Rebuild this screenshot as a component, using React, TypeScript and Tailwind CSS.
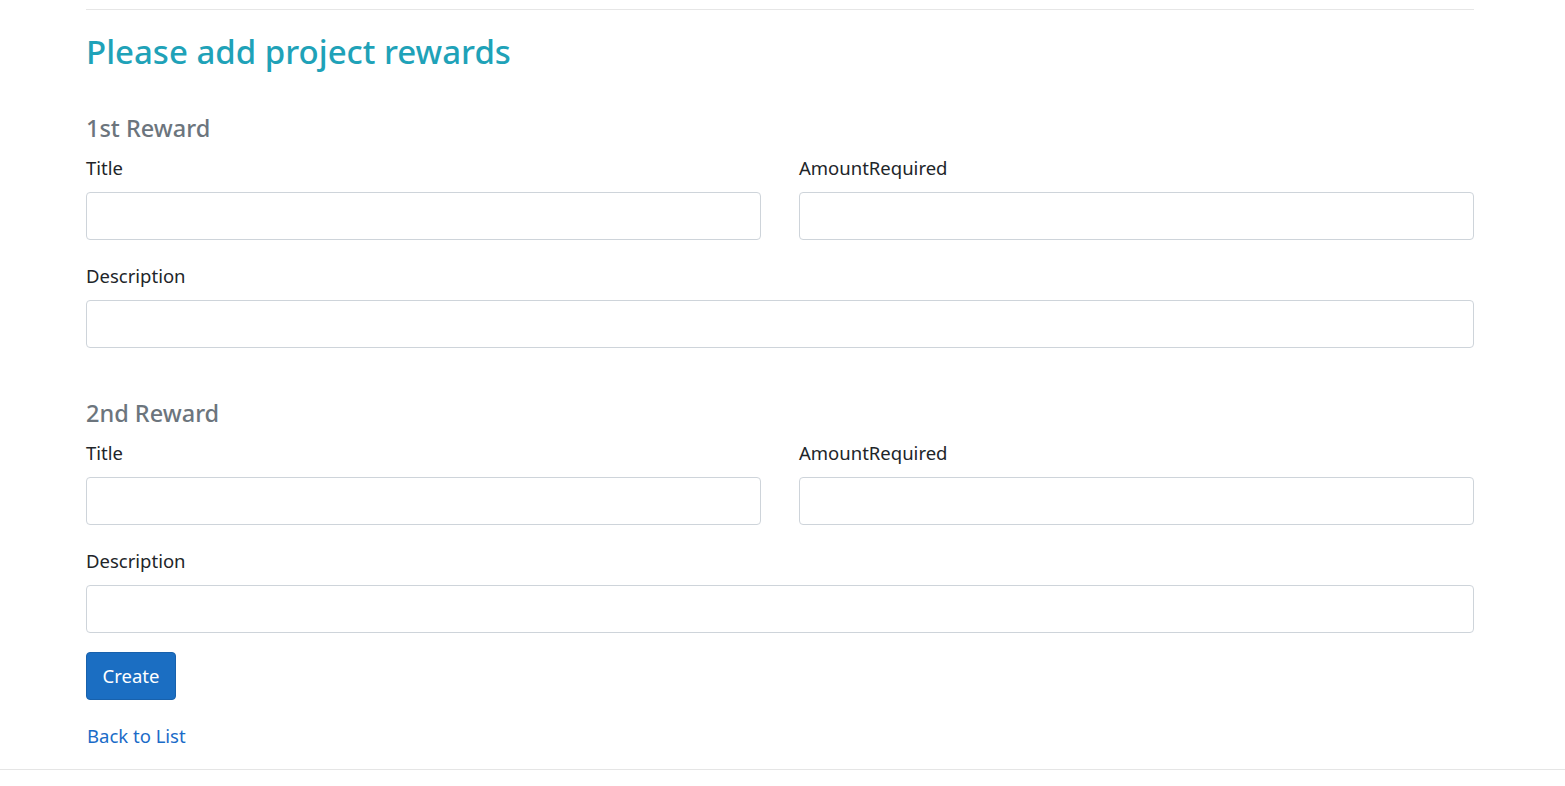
export default function App() {
  const font = { fontFamily: '"Noto Sans", "Open Sans", sans-serif' };

  const Field = ({ label }: { label: string }) => (
    <div className="flex flex-col">
      <label className="block text-[18.5px] leading-[24px] text-[#212529]">{label}</label>
      <input
        type="text"
        className="mt-[12px] h-[48px] w-full rounded-[4px] border border-[#ced4da] bg-white px-3 outline-none"
      />
    </div>
  );

  const Reward = ({ title }: { title: string }) => (
    <div>
      <h4 className="text-[23.5px] leading-[29px] font-medium text-[#6c757d]">{title}</h4>
      <div className="mt-[13px] grid grid-cols-2 gap-x-[38px]">
        <Field label="Title" />
        <Field label="AmountRequired" />
      </div>
      <div className="mt-[24px]">
        <Field label="Description" />
      </div>
    </div>
  );

  return (
    <div className="min-h-screen bg-white" style={font}>
      <div className="ml-[86px] w-[1388px] pt-[9px]">
        <div className="border-t border-[#e6e6e6]" />

        <h2 className="mt-[23px] text-[33px] leading-[38px] font-medium text-[#1fa2b8]">
          Please add project rewards
        </h2>

        <div className="mt-[43px]">
          <Reward title="1st Reward" />
        </div>

        <div className="mt-[51px]">
          <Reward title="2nd Reward" />
        </div>

        <button
          type="submit"
          className="mt-[19px] h-[48px] w-[90px] rounded-[4px] border border-[#1861ac] bg-[#1b6ec2] text-[18.5px] text-white"
        >
          Create
        </button>

        <div className="mt-[24px] text-[18.5px] leading-[24px]">
          <a href="#" className="ml-px text-[#1a6bc8]">Back to List</a>
        </div>
      </div>

      <div className="mt-[21px] border-t border-[#e5e5e5]" />
    </div>
  );
}
